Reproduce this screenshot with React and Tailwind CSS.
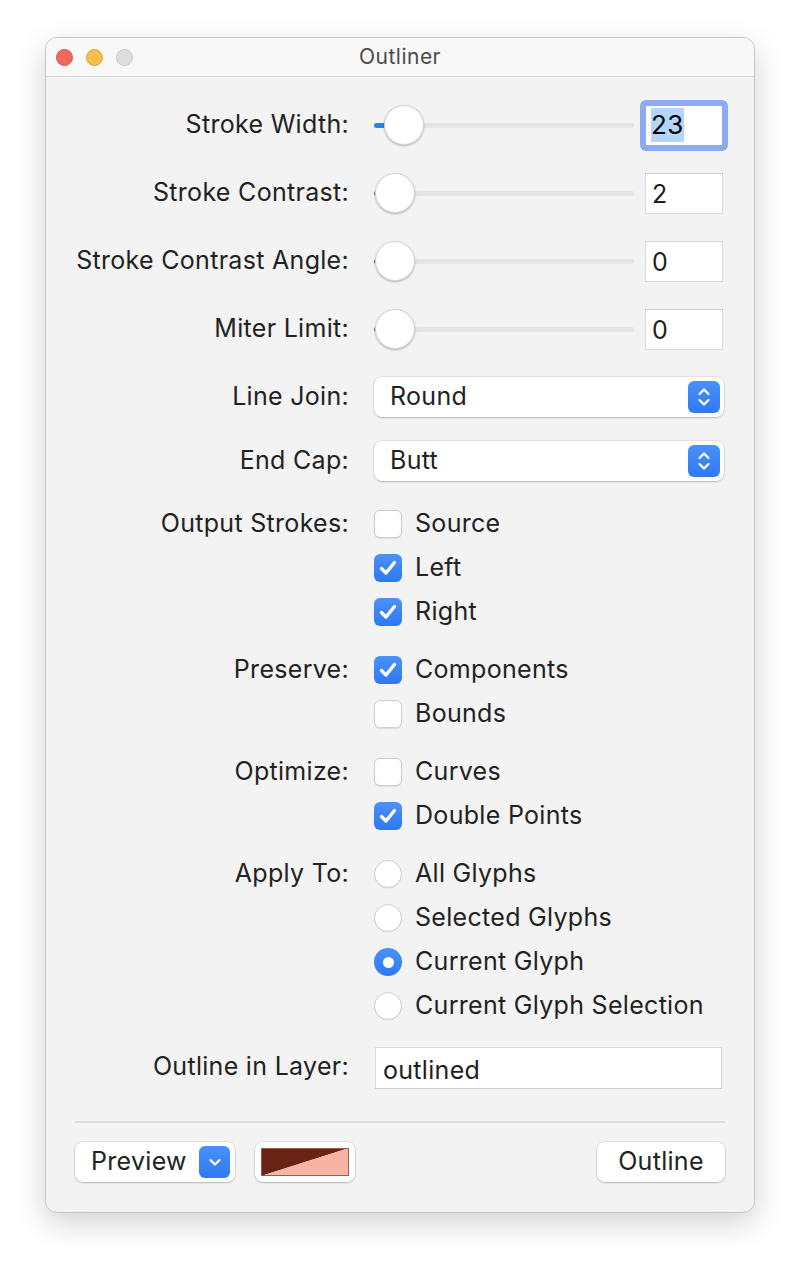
const font = { fontFamily: '"Inter", "Liberation Sans", sans-serif' };

const Chevrons = () => (
	<svg width="14" height="22" viewBox="0 0 14 22" fill="none" stroke="white" strokeWidth="2.2" strokeLinecap="round" strokeLinejoin="round">
		<path d="M2.5 8 L7 3.5 L11.5 8" />
		<path d="M2.5 14 L7 18.5 L11.5 14" />
	</svg>
);

const Slider = ({ pos = 0 }) => (
	<div className="relative w-[260px] h-[40px] flex items-center">
		<div className="w-full h-[5px] rounded-full bg-[#e4e4e4]" />
		{pos > 0 && (
			<div className="absolute left-0 top-[17.5px] h-[5px] rounded-full bg-[#2f7cf6]" style={{ width: pos + 20 }} />
		)}
		{pos === 0 && <div className="absolute left-0 top-[17.5px] h-[5px] w-[4px] rounded-l-full bg-[#2f7cf6]" />}
		<div
			className="absolute top-0 w-[40px] h-[40px] rounded-full bg-white border border-[#d4d4d4] shadow-[0_1px_2px_rgba(0,0,0,0.25)]"
			style={{ left: pos + 1 }}
		/>
	</div>
);

const NumField = ({ value, focused }) =>
	focused ? (
		<div className="ml-[6px] w-[88px] h-[51px] -my-[4px] rounded-[6px] bg-[#8eabf2] p-[6px]">
			<div className="w-full h-full bg-white flex items-center pl-[5px] text-[26px] text-black">
				<span className="bg-[#b4d4fb] leading-[34px] tracking-[0.5px]">{value}</span>
			</div>
		</div>
	) : (
		<div className="ml-[11px] w-[78px] h-[41px] bg-white border border-[#dadada] border-t-[#cfcfcf] flex items-center pl-[6px] pt-[3px] text-[25px] text-[#1e1e1e]">
			{value}
		</div>
	);

const Popup = ({ value }) => (
	<div className="w-[350px] h-[40px] rounded-[8px] bg-white shadow-[0_0_0_0.5px_rgba(0,0,0,0.12),0_1px_2px_rgba(0,0,0,0.2)] flex items-center justify-between pl-[16px] pr-[4px]">
		<span className="text-[25px] tracking-[0.3px] text-[#222]">{value}</span>
		<div className="w-[32px] h-[32px] rounded-[6px] bg-gradient-to-b from-[#4a91f8] to-[#2f78f4] flex items-center justify-center">
			<Chevrons />
		</div>
	</div>
);

const Check = ({ on, label }) => (
	<div className="h-[44px] flex items-center">
		{on ? (
			<div className="w-[28px] h-[28px] rounded-[6px] bg-gradient-to-b from-[#4a91f8] to-[#2f78f4] flex items-center justify-center">
				<svg width="18" height="16" viewBox="0 0 18 16" fill="none" stroke="white" strokeWidth="3.4" strokeLinecap="round" strokeLinejoin="round">
					<path d="M2.5 8.5 L7 13 L15.5 2.5" />
				</svg>
			</div>
		) : (
			<div className="w-[28px] h-[28px] rounded-[6px] bg-white border border-[#cfcfcf] shadow-[0_0.5px_1px_rgba(0,0,0,0.08)]" />
		)}
		<span className="ml-[13px] text-[25px] tracking-[0.3px] text-[#222]">{label}</span>
	</div>
);

const Radio = ({ on, label }) => (
	<div className="h-[44px] flex items-center">
		{on ? (
			<div className="w-[28px] h-[28px] rounded-full bg-gradient-to-b from-[#4a91f8] to-[#2f78f4] flex items-center justify-center">
				<div className="w-[11px] h-[11px] rounded-full bg-white" />
			</div>
		) : (
			<div className="w-[28px] h-[28px] rounded-full bg-white border border-[#cfcfcf] shadow-[0_0.5px_1px_rgba(0,0,0,0.08)]" />
		)}
		<span className="ml-[13px] text-[25px] tracking-[0.3px] text-[#222]">{label}</span>
	</div>
);

const Label = ({ children, className = "" }) => (
	<div className={"w-[303px] text-right text-[25px] tracking-[0.3px] text-[#222] " + className}>{children}</div>
);

const SliderRow = ({ label, value, pos, focused, className = "" }) => (
	<div className={"flex items-center h-[40px] " + className}>
		<Label>{label}</Label>
		<div className="ml-[25px] flex items-center">
			<Slider pos={pos} />
			<NumField value={value} focused={focused} />
		</div>
	</div>
);

const Group = ({ label, children, className = "" }) => (
	<div className={"flex " + className}>
		<Label className="h-[44px] flex items-center justify-end">{label}</Label>
		<div className="ml-[25px] flex flex-col">{children}</div>
	</div>
);

export default function App() {
	return (
		<div className="w-[800px] h-[1266px] bg-white pt-[37px] pl-[45px]" style={font}>
			<div className="w-[710px] h-[1176px] rounded-[12px] border border-[#c6c6c6] bg-[#f3f3f3] overflow-hidden shadow-[0_10px_30px_rgba(0,0,0,0.18)] flex flex-col">
				<div className="relative h-[39px] shrink-0 bg-[#f8f8f8] border-b border-[#d8d8d8] flex items-center justify-center">
					<div className="absolute left-[10px] top-[11px] flex gap-[13px]">
						<div className="w-[17px] h-[17px] rounded-full bg-[#ee6a5f] border border-[#d8574d]" />
						<div className="w-[17px] h-[17px] rounded-full bg-[#f5bf4f] border border-[#d9a33a]" />
						<div className="w-[17px] h-[17px] rounded-full bg-[#dedede] border border-[#c9c9c9]" />
					</div>
					<span className="text-[21px] tracking-[0.5px] text-[#4a4a4a]">Outliner</span>
				</div>

				<div className="flex flex-col pt-[28px]">
					<SliderRow label="Stroke Width:" value="23" pos={9} focused />
					<SliderRow label="Stroke Contrast:" value="2" pos={0} className="mt-[28px]" />
					<SliderRow label="Stroke Contrast Angle:" value="0" pos={0} className="mt-[28px]" />
					<SliderRow label="Miter Limit:" value="0" pos={0} className="mt-[28px]" />

					<div className="flex items-center mt-[28px]">
						<Label>Line Join:</Label>
						<div className="ml-[25px]">
							<Popup value="Round" />
						</div>
					</div>
					<div className="flex items-center mt-[24px]">
						<Label>End Cap:</Label>
						<div className="ml-[25px]">
							<Popup value="Butt" />
						</div>
					</div>

					<Group label="Output Strokes:" className="mt-[21px]">
						<Check label="Source" />
						<Check on label="Left" />
						<Check on label="Right" />
					</Group>
					<Group label="Preserve:" className="mt-[14px]">
						<Check on label="Components" />
						<Check label="Bounds" />
					</Group>
					<Group label="Optimize:" className="mt-[14px]">
						<Check label="Curves" />
						<Check on label="Double Points" />
					</Group>
					<Group label="Apply To:" className="mt-[14px]">
						<Radio label="All Glyphs" />
						<Radio label="Selected Glyphs" />
						<Radio on label="Current Glyph" />
						<Radio label="Current Glyph Selection" />
					</Group>

					<div className="flex mt-[19px]">
						<Label className="pt-[1px]">Outline in Layer:</Label>
						<div className="ml-[26px] w-[347px] h-[42px] bg-white border border-[#dadada] border-b-[#cdcdcd] flex items-center pl-[7px] pt-[6px] text-[25px] tracking-[0.3px] text-[#1e1e1e]">
							outlined
						</div>
					</div>

					<div className="mx-[29px] mt-[32px] h-[2px] bg-[#dedede]" />

					<div className="flex items-center justify-between mx-[29px] mt-[19px]">
						<div className="flex items-center gap-[20px]">
							<div className="w-[160px] h-[40px] rounded-[8px] bg-white shadow-[0_0_0_0.5px_rgba(0,0,0,0.12),0_1px_2px_rgba(0,0,0,0.2)] flex items-center justify-between pl-[16px] pr-[5px]">
								<span className="text-[25px] tracking-[0.3px] text-[#222]">Preview</span>
								<div className="w-[31px] h-[32px] rounded-[6px] bg-gradient-to-b from-[#4a91f8] to-[#2f78f4] flex items-center justify-center">
									<svg width="14" height="10" viewBox="0 0 14 10" fill="none" stroke="white" strokeWidth="2.2" strokeLinecap="round" strokeLinejoin="round">
										<path d="M2.5 3 L7 7.5 L11.5 3" />
									</svg>
								</div>
							</div>
							<div className="w-[100px] h-[40px] rounded-[8px] bg-white shadow-[0_0_0_0.5px_rgba(0,0,0,0.12),0_1px_2px_rgba(0,0,0,0.2)] flex items-center justify-center">
								<svg width="88" height="28" viewBox="0 0 88 28">
									<polygon points="0,0 88,0 0,28" fill="#682314" />
									<polygon points="88,0 88,28 0,28" fill="#f7b3a3" />
									<rect x="0.5" y="0.5" width="87" height="27" fill="none" stroke="#9a5a4c" strokeWidth="1" />
								</svg>
							</div>
						</div>
						<div className="w-[128px] h-[40px] rounded-[8px] bg-white shadow-[0_0_0_0.5px_rgba(0,0,0,0.12),0_1px_2px_rgba(0,0,0,0.2)] flex items-center justify-center">
							<span className="text-[25px] tracking-[0.3px] text-[#222]">Outline</span>
						</div>
					</div>
				</div>
			</div>
		</div>
	);
}
